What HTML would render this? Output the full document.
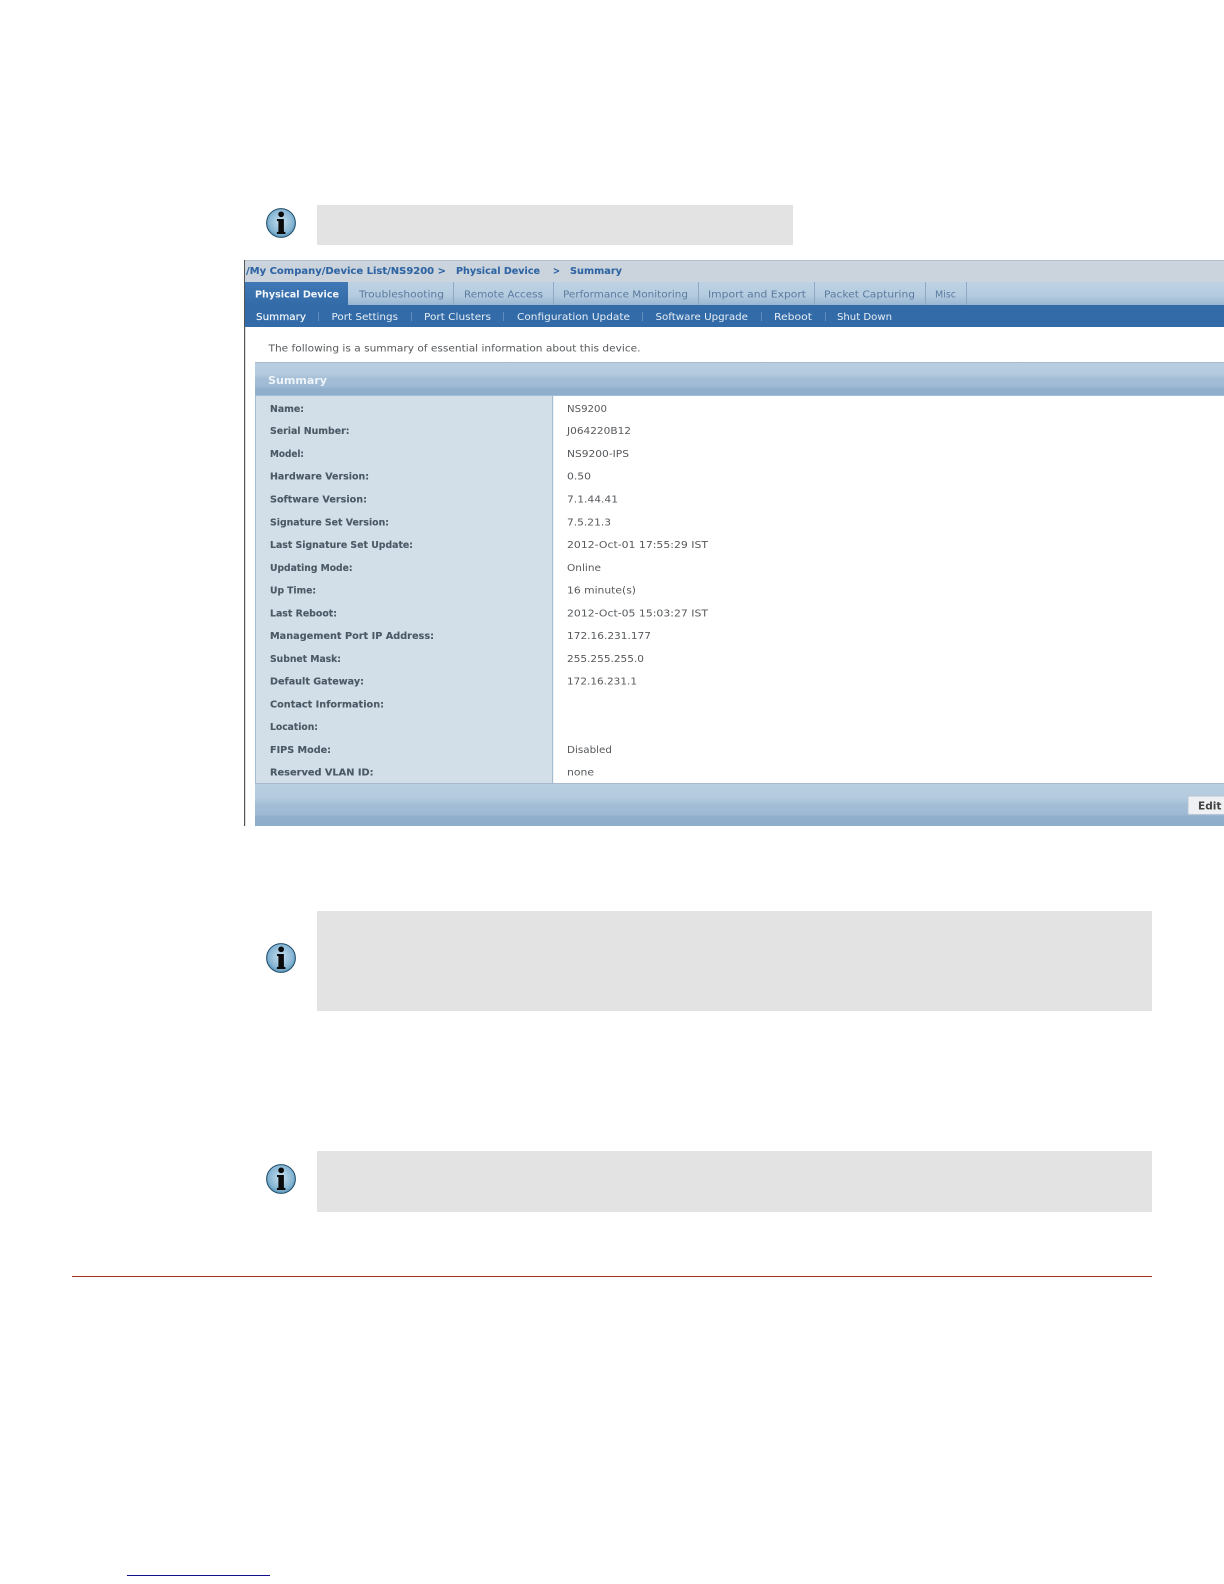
<!DOCTYPE html>
<html lang="en"><head><meta charset="utf-8"><title>Physical Device Summary</title>
<style>
html,body{margin:0;padding:0;background:#fff;width:1224px;height:1584px;overflow:hidden}
svg{position:absolute;left:0;top:0;display:block}
text{font-family:"DejaVu Sans","Liberation Sans",sans-serif;font-size:10px}
.b{font-weight:bold}
.l{font-weight:bold;fill:#4a5966;stroke:#4a5966;stroke-width:.12}
.v{fill:#56595c}
.t{fill:#5a7a9e}
.n{fill:#e6eef6}
.c{font-weight:bold;fill:#2f65a3;stroke:#2f65a3;stroke-width:.1}
</style></head><body>
<svg width="1224" height="1584" viewBox="0 0 1224 1584" xmlns="http://www.w3.org/2000/svg">
<defs>
<linearGradient id="bar" x1="0" y1="0" x2="0" y2="1"><stop offset="0" stop-color="#b9cfe1"/><stop offset=".35" stop-color="#b4cbdf"/><stop offset=".5" stop-color="#a3bdd6"/><stop offset=".72" stop-color="#9fbad4"/><stop offset=".78" stop-color="#91afcd"/><stop offset="1" stop-color="#8dadcb"/></linearGradient>
<linearGradient id="tab" x1="0" y1="0" x2="0" y2="1"><stop offset="0" stop-color="#bdd2e4"/><stop offset=".6" stop-color="#b4cbdf"/><stop offset="1" stop-color="#98b6d2"/></linearGradient>
<linearGradient id="act" x1="0" y1="0" x2="0" y2="1"><stop offset="0" stop-color="#3f78b4"/><stop offset="1" stop-color="#336ba8"/></linearGradient>
<radialGradient id="ic" cx=".5" cy=".45" r=".6"><stop offset="0" stop-color="#c6e0f0"/><stop offset=".7" stop-color="#86b5d3"/><stop offset="1" stop-color="#4485ad"/></radialGradient>
<g id="info"><circle cx="0" cy="0" r="14.4" fill="url(#ic)" stroke="#1c4a66" stroke-width="1"/><text x="0" y="10.5" text-anchor="middle" style="font-family:'Liberation Serif',serif;font-size:31px;font-weight:bold;stroke:#0b0b0b;stroke-width:1.1" fill="#0b0b0b">i</text></g>
</defs>

<rect x="317" y="205" width="476" height="40" fill="#e3e3e3"/>
<rect x="317" y="911" width="835" height="100" fill="#e3e3e3"/>
<rect x="317" y="1151" width="835" height="61" fill="#e3e3e3"/>
<use href="#info" x="281" y="223"/>
<use href="#info" x="281" y="958"/>
<use href="#info" x="281" y="1179"/>

<rect x="72" y="1276" width="1080" height="1" fill="#9c2f28"/>
<rect x="127" y="1575" width="143" height="1" fill="#10108f"/>

<g style="filter:blur(.3px)">
<rect x="244" y="260" width="1.2" height="566" fill="#555"/>
<rect x="245" y="260" width="979" height="22" fill="#cbd4dd"/>
<rect x="245" y="260" width="979" height="1" fill="#b3c0d0"/>
<text class="c" x="246" y="274" textLength="200" lengthAdjust="spacingAndGlyphs">/My Company/Device List/NS9200  &gt;</text>
<text class="c" x="456" y="274" textLength="84" lengthAdjust="spacingAndGlyphs">Physical Device</text>
<text class="c" x="553" y="274" textLength="7" lengthAdjust="spacingAndGlyphs">&gt;</text>
<text class="c" x="570" y="274" textLength="52" lengthAdjust="spacingAndGlyphs">Summary</text>

<rect x="245" y="282" width="979" height="23" fill="url(#tab)"/>
<rect x="245" y="282" width="103" height="23" fill="url(#act)"/>
<rect x="453" y="282" width="1" height="23" fill="#8fa9c4"/><rect x="553" y="282" width="1" height="23" fill="#8fa9c4"/><rect x="698" y="282" width="1" height="23" fill="#8fa9c4"/><rect x="814" y="282" width="1" height="23" fill="#8fa9c4"/><rect x="925" y="282" width="1" height="23" fill="#8fa9c4"/><rect x="966" y="282" width="1" height="23" fill="#8fa9c4"/>
<text class="b" fill="#f2f6fa" x="255" y="297.5" textLength="84" lengthAdjust="spacingAndGlyphs">Physical Device</text>
<text class="t" x="359" y="297.5" textLength="85" lengthAdjust="spacingAndGlyphs">Troubleshooting</text>
<text class="t" x="464" y="297.5" textLength="79" lengthAdjust="spacingAndGlyphs">Remote Access</text>
<text class="t" x="563" y="297.5" textLength="125" lengthAdjust="spacingAndGlyphs">Performance Monitoring</text>
<text class="t" x="708" y="297.5" textLength="98" lengthAdjust="spacingAndGlyphs">Import and Export</text>
<text class="t" x="824" y="297.5" textLength="91" lengthAdjust="spacingAndGlyphs">Packet Capturing</text>
<text class="t" x="935" y="297.5" textLength="21" lengthAdjust="spacingAndGlyphs">Misc</text>

<rect x="245" y="305" width="979" height="22" fill="#336ba8"/>
<text fill="#f5f8fb" x="256" y="320.2" textLength="50" lengthAdjust="spacingAndGlyphs" style="stroke:#f5f8fb;stroke-width:.15">Summary</text>
<text class="n" x="331.5" y="320.2" textLength="66.5" lengthAdjust="spacingAndGlyphs">Port Settings</text>
<text class="n" x="424" y="320.2" textLength="67" lengthAdjust="spacingAndGlyphs">Port Clusters</text>
<text class="n" x="517" y="320.2" textLength="113" lengthAdjust="spacingAndGlyphs">Configuration Update</text>
<text class="n" x="655.5" y="320.2" textLength="92.5" lengthAdjust="spacingAndGlyphs">Software Upgrade</text>
<text class="n" x="774" y="320.2" textLength="38" lengthAdjust="spacingAndGlyphs">Reboot</text>
<text class="n" x="837" y="320.2" textLength="55" lengthAdjust="spacingAndGlyphs">Shut Down</text>
<g fill="#5f8dbe"><rect x="318" y="312" width="1" height="9"/><rect x="411" y="312" width="1" height="9"/><rect x="503" y="312" width="1" height="9"/><rect x="642" y="312" width="1" height="9"/><rect x="761" y="312" width="1" height="9"/><rect x="825" y="312" width="1" height="9"/></g>

<text class="v" x="268.5" y="351.3" textLength="372" lengthAdjust="spacingAndGlyphs">The following is a summary of essential information about this device.</text>

<rect x="255" y="362" width="969" height="34" fill="url(#bar)"/>
<rect x="255" y="362" width="969" height="1" fill="#a9bacd"/>
<text x="268" y="384" class="b" fill="#eef4f9" textLength="59" lengthAdjust="spacingAndGlyphs" style="font-size:11px">Summary</text>

<rect x="255" y="396" width="297" height="387" fill="#d3dfe8"/>
<rect x="255" y="396" width="1" height="387" fill="#a3bdd6"/>
<rect x="552" y="396" width="1.2" height="387" fill="#a6bccf"/>
<rect x="255" y="395" width="969" height="1" fill="#a3bdd6"/>

<text class="l" x="270" y="411.8" textLength="34" lengthAdjust="spacingAndGlyphs">Name:</text>
<text class="l" x="270" y="434.2" textLength="79.5" lengthAdjust="spacingAndGlyphs">Serial Number:</text>
<text class="l" x="270" y="457" textLength="34" lengthAdjust="spacingAndGlyphs">Model:</text>
<text class="l" x="270" y="479.7" textLength="99" lengthAdjust="spacingAndGlyphs">Hardware Version:</text>
<text class="l" x="270" y="502.5" textLength="97" lengthAdjust="spacingAndGlyphs">Software Version:</text>
<text class="l" x="270" y="525.4" textLength="119" lengthAdjust="spacingAndGlyphs">Signature Set Version:</text>
<text class="l" x="270" y="548" textLength="143" lengthAdjust="spacingAndGlyphs">Last Signature Set Update:</text>
<text class="l" x="270" y="570.8" textLength="82.5" lengthAdjust="spacingAndGlyphs">Updating Mode:</text>
<text class="l" x="270" y="593.6" textLength="46" lengthAdjust="spacingAndGlyphs">Up Time:</text>
<text class="l" x="270" y="616.4" textLength="67" lengthAdjust="spacingAndGlyphs">Last Reboot:</text>
<text class="l" x="270" y="639.2" textLength="164" lengthAdjust="spacingAndGlyphs">Management Port IP Address:</text>
<text class="l" x="270" y="661.8" textLength="71" lengthAdjust="spacingAndGlyphs">Subnet Mask:</text>
<text class="l" x="270" y="684.6" textLength="94" lengthAdjust="spacingAndGlyphs">Default Gateway:</text>
<text class="l" x="270" y="707.3" textLength="114" lengthAdjust="spacingAndGlyphs">Contact Information:</text>
<text class="l" x="270" y="730.2" textLength="48" lengthAdjust="spacingAndGlyphs">Location:</text>
<text class="l" x="270" y="753" textLength="61" lengthAdjust="spacingAndGlyphs">FIPS Mode:</text>
<text class="l" x="270" y="775.6" textLength="103.5" lengthAdjust="spacingAndGlyphs">Reserved VLAN ID:</text>

<text class="v" x="567" y="411.8" textLength="40" lengthAdjust="spacingAndGlyphs">NS9200</text>
<text class="v" x="567" y="434.2" textLength="64" lengthAdjust="spacingAndGlyphs">J064220B12</text>
<text class="v" x="567" y="457" textLength="62" lengthAdjust="spacingAndGlyphs">NS9200-IPS</text>
<text class="v" x="567" y="479.7" textLength="24" lengthAdjust="spacingAndGlyphs">0.50</text>
<text class="v" x="567" y="502.5" textLength="51" lengthAdjust="spacingAndGlyphs">7.1.44.41</text>
<text class="v" x="567" y="525.4" textLength="44" lengthAdjust="spacingAndGlyphs">7.5.21.3</text>
<text class="v" x="567" y="548" textLength="141" lengthAdjust="spacingAndGlyphs">2012-Oct-01 17:55:29 IST</text>
<text class="v" x="567" y="570.8" textLength="34" lengthAdjust="spacingAndGlyphs">Online</text>
<text class="v" x="567" y="593.6" textLength="69" lengthAdjust="spacingAndGlyphs">16 minute(s)</text>
<text class="v" x="567" y="616.4" textLength="141" lengthAdjust="spacingAndGlyphs">2012-Oct-05 15:03:27 IST</text>
<text class="v" x="567" y="639.2" textLength="84" lengthAdjust="spacingAndGlyphs">172.16.231.177</text>
<text class="v" x="567" y="661.8" textLength="77" lengthAdjust="spacingAndGlyphs">255.255.255.0</text>
<text class="v" x="567" y="684.6" textLength="70" lengthAdjust="spacingAndGlyphs">172.16.231.1</text>
<text class="v" x="567" y="753" textLength="45" lengthAdjust="spacingAndGlyphs">Disabled</text>
<text class="v" x="567" y="775.6" textLength="27" lengthAdjust="spacingAndGlyphs">none</text>

<rect x="255" y="783" width="969" height="43" fill="url(#bar)"/>
<rect x="255" y="783" width="969" height="1" fill="#a9bacd"/>
<rect x="1188" y="796" width="38" height="18.5" rx="1" fill="#eef0f3" stroke="#b5c5d5" stroke-width="1"/>
<text x="1198" y="809.5" class="b" fill="#444" textLength="23.5" lengthAdjust="spacingAndGlyphs" style="font-size:10.5px">Edit</text>
</g>
</svg>
</body></html>
